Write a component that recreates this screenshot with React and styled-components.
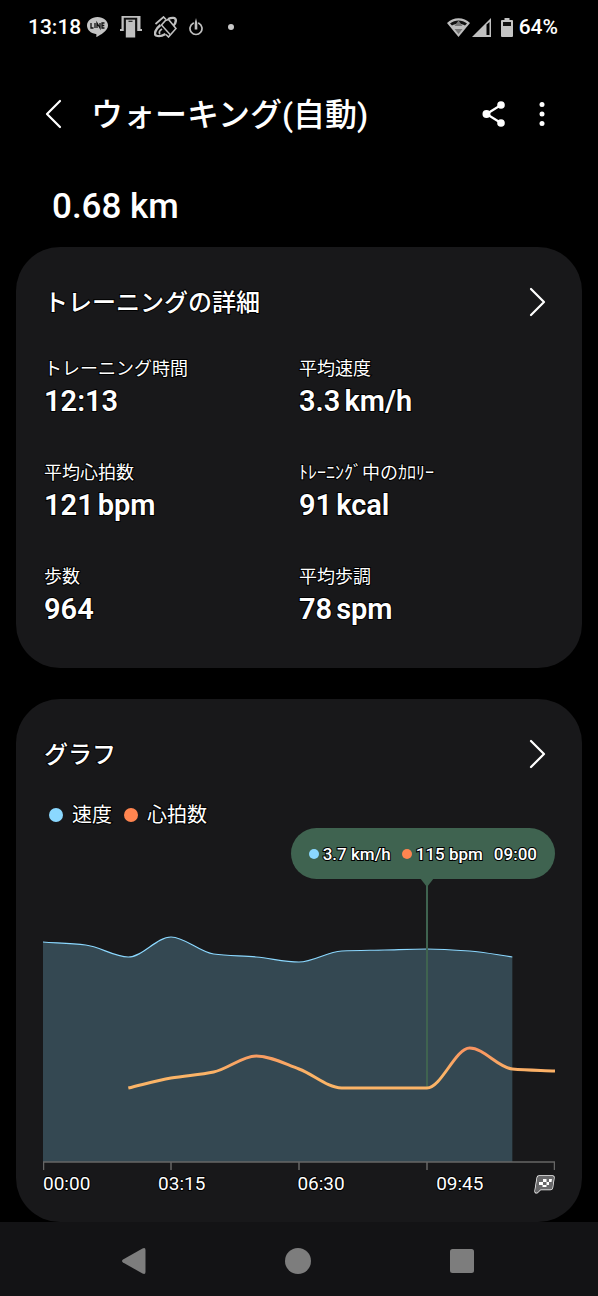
import React from "react";
import styled, { createGlobalStyle } from "styled-components";

const FONT = 'Roboto, "Noto Sans CJK JP", sans-serif';
const SPEED = "#8bd8ff";
const HEART = "#ff8550";
const TIP = "#3f6350";

const GlobalStyle = createGlobalStyle`
  * { box-sizing: border-box; }
  body { margin: 0; background: #000; color: #fff; font-family: ${FONT}; }
  button { border: 0; padding: 0; background: none; color: inherit; font: inherit; cursor: pointer; }
  svg { display: block; }
`;

const Page = styled.div`
  display: flex;
  flex-direction: column;
  min-height: 100vh;
`;

const StatusBar = styled.div`
  display: flex;
  justify-content: space-between;
  align-items: center;
  height: 54px;
  padding: 0 40px 0 28px;
  font-size: 21px;
  font-weight: 500;
`;

const StatusGroup = styled.div`
  display: flex;
  align-items: center;
  gap: ${(p) => p.$gap}px;
`;

const Header = styled.header`
  display: flex;
  align-items: center;
  height: 120px;
  padding: 0 36px 0 33px;
`;

const IconButton = styled.button`
  display: flex;
  align-items: center;
  justify-content: center;
  flex: none;
  width: ${(p) => p.$width || 40}px;
  height: 48px;
`;

const PageTitle = styled.h1`
  flex: 1;
  margin: 0 0 0 18px;
  padding-top: 2px;
  font-size: 32px;
  line-height: 48px;
  font-weight: 500;
`;

const Actions = styled.div`
  display: flex;
  gap: 8px;
`;

const Distance = styled.p`
  margin: 0;
  padding: 9px 52px 16px;
  font-size: 35px;
  line-height: 48px;
  font-weight: 500;
`;

const Card = styled.section`
  margin: 0 16px;
  padding: 31px 28px ${(p) => p.$bottom}px;
  border-radius: 44px;
  background: #18181a;
  -webkit-text-stroke: 2px #000;
  paint-order: stroke fill;

  & + & { margin-top: 31px; }
`;

const CardHead = styled.div`
  display: flex;
  align-items: center;
  justify-content: space-between;
  height: 48px;
`;

const CardTitle = styled.h2`
  margin: 0;
  padding-top: 2px;
  font-size: 24px;
  line-height: 36px;
  font-weight: 500;
`;

const Stats = styled.dl`
  display: grid;
  grid-template-columns: 1fr 1fr;
  row-gap: 40px;
  margin: 29px 0 0;
`;

const StatLabel = styled.dt`
  font-size: 18px;
  line-height: 28px;
  white-space: nowrap;
`;

const StatValue = styled.dd`
  display: flex;
  gap: 4px;
  margin: 0;
  font-size: 29px;
  line-height: 36px;
  font-weight: 600;
`;

const Legend = styled.div`
  display: flex;
  gap: 12px;
  margin: 21px 0 0 5px;
  font-size: 20px;
  line-height: 32px;
`;

const LegendItem = styled.span`
  display: flex;
  align-items: center;
  gap: 9px;
`;

const Dot = styled.i`
  flex: none;
  width: ${(p) => p.$size}px;
  height: ${(p) => p.$size}px;
  border-radius: 50%;
  background: ${(p) => p.$color};
`;

const Chart = styled.div`
  position: relative;
  margin: -3px -1px 0;
`;

const Plot = styled.svg`
  width: 100%;
  height: 344px;
`;

const Tooltip = styled.div`
  position: absolute;
  top: 0;
  right: 0;
  display: flex;
  align-items: center;
  gap: 11px;
  height: 51px;
  padding: 0 18px;
  border-radius: 26px;
  background: ${TIP};
  font-size: 17px;
  font-weight: 500;
  white-space: nowrap;
`;

const TooltipItem = styled.span`
  display: flex;
  align-items: center;
  gap: 4px;
`;

const Pointer = styled.div`
  position: absolute;
  top: 50px;
  left: 75%;
  width: 14px;
  height: 9px;
  margin-left: -7px;
  background: ${TIP};
  clip-path: polygon(0 0, 100% 0, 50% 100%);
`;

const Axis = styled.div`
  display: grid;
  grid-template-columns: 69fr 139fr 139fr 138fr 26fr;
  align-items: center;
  height: 24px;
  font-size: 19px;
  line-height: 24px;
  text-align: center;

  > :first-child { text-align: left; }
  > :last-child { justify-self: end; }
`;

const NavBar = styled.nav`
  display: flex;
  justify-content: center;
  align-items: center;
  gap: 100px;
  height: 74px;
  margin-top: auto;
  padding: 3px 3px 0 0;
  background: #131315;
  color: #7d7d7d;
`;

const Chevron = ({ left }) => (
  <svg width="18" height="30" viewBox="0 0 18 30" fill="none" stroke="#fff" strokeWidth="2.2" strokeLinecap="round" strokeLinejoin="round">
    <path d={left ? "M16 2 3 15l13 13" : "M2 2l13 13L2 28"} />
  </svg>
);

const LineIcon = () => (
  <svg width="21" height="20" viewBox="0 0 21 20">
    <path d="M10.500 0C4.700 0 0 3.900 0 8.500c0 4.300 3.700 7.800 8.700 8.500.8.200.8.600.6 2.400 0 .5.300.7.800.4C13 18.200 21 13.800 21 8.500 21 3.900 16.300 0 10.500 0z" fill="#c4c4c4" />
    <path d="M4 6v5h2.500M8 6v5M10 11V6l3 5V6M17.500 6H15v5h2.500M15 8.500h2.300" fill="none" stroke="#111" strokeWidth="1.300" />
  </svg>
);

const DeviceIcon = () => (
  <svg width="22" height="22" viewBox="0 0 22 22" fill="#c0c0c0">
    <path d="M1.500 0h19v13H22v2h-5V3.500a1 1 0 0 0-1-1H6a1 1 0 0 0-1 1V15H0v-2h1.500z" />
    <path fillRule="evenodd" d="M5.800 3.500h9.400V21.500H5.800zM8.500 4.700v1h4v-1z" />
    <path d="M4.500 15.500V2.600h12v12.900" fill="none" stroke="#111" strokeWidth="1.500" />
  </svg>
);

const RotateIcon = () => (
  <svg width="23" height="22" viewBox="0 0 23 22" fill="none" stroke="#c0c0c0">
    <path d="M1.500 8 9.500 1l2.500 2.500" strokeWidth="1.700" />
    <path d="M7 9.500 11.500 4.500l3-1L22 12.500 14.500 21 12 18.500" strokeWidth="1.600" />
    <path d="M7.500 9 16.500 19" strokeWidth="1.400" />
    <path d="M14 3c4-1.800 7.500-1.500 7.800 1 .2 2-.8 4-2.300 5.500" strokeWidth="2.400" />
    <path d="M6.500 9C2 12.500-.5 18 2 19.500c2.500 1.200 6.500.3 9.500-1.500" strokeWidth="2.400" />
    <path d="M8 13c-2.500 1.500-3.500 3.500-2 5" strokeWidth="1.800" />
  </svg>
);

const PowerIcon = () => (
  <svg width="14" height="18" viewBox="0 0 14 18" fill="none" stroke="#c0c0c0" strokeLinecap="round">
    <path d="M4.200 5.200a6 6 0 1 0 5.600 0" strokeWidth="1.700" />
    <path d="M7 0 8.300 5v6.500H5.700V5z" fill="#c0c0c0" stroke="none" />
  </svg>
);

const MoreDot = () => (
  <svg width="20" height="6" viewBox="0 0 20 6"><circle cx="16" cy="3" r="3" fill="#c8c8c8" /></svg>
);

const WifiIcon = () => (
  <svg width="23" height="19" viewBox="0 0 23 19">
    <path d="M11.500 19 0 5C6-1.300 17-1.300 23 5z" fill="#bebebe" />
    <path d="M3 5.500C8 1.500 15 1.500 20 5.500L18 7.500C14 5 9 5 5 7.500z" fill="#111" />
    <path d="M11.500 2.500 15.500 8h-8zM7.500 11h8l-4 5z" fill="#777" />
  </svg>
);

const SignalIcon = () => (
  <svg width="19" height="19" viewBox="0 0 19 19">
    <path d="M19 0v19H0z" fill="#c0c0c0" />
    <path d="M14.500 6.500 17.500 4v13h-3z" fill="#000" />
  </svg>
);

const BatteryIcon = () => (
  <svg width="12" height="19" viewBox="0 0 12 19">
    <path d="M3.500 0h5v2H11a1 1 0 0 1 1 1v15a1 1 0 0 1-1 1H1a1 1 0 0 1-1-1V3a1 1 0 0 1 1-1h2.500z" fill="#c4c4c4" />
    <path d="M2 4h8v4H2z" fill="#111" />
  </svg>
);

const ShareIcon = () => (
  <svg width="24" height="26" viewBox="0 0 24 26" fill="#fff">
    <path d="M19 4 4.500 13 19 22" fill="none" stroke="#fff" strokeWidth="2.200" />
    <circle cx="4.500" cy="13" r="4" />
    <circle cx="19" cy="4" r="3.800" />
    <circle cx="19" cy="22" r="3.800" />
  </svg>
);

const MoreIcon = () => (
  <svg width="6" height="26" viewBox="0 0 6 26" fill="#fff">
    <circle cx="3" cy="3.500" r="2.500" />
    <circle cx="3" cy="13" r="2.500" />
    <circle cx="3" cy="22.500" r="2.500" />
  </svg>
);

const FlagIcon = () => (
  <svg width="21" height="19" viewBox="0 0 21 19" role="img" aria-label="終了">
    <path d="M5 1h13.500q1.700 0 1.500 1.700l-1.500 10q-.3 1.800-2 1.800H6.500L3.500 17.500q-2.700.8-2.500-1.500L3.200 2.700Q3.500 1 5 1z" fill="#68686a" stroke="#fff" strokeWidth="1.400" />
    <path d="M9 4h3.500v3H9zM15 4h3l-.5 3H15zM5 7h4v3H5zM12.500 7H15v3h-2.500zM8.500 10h4v2h-4z" fill="#fff" />
  </svg>
);

const stats = [
  ["トレーニング時間", "12:13"],
  ["平均速度", "3.3", "km/h"],
  ["平均心拍数", "121", "bpm"],
  ["ﾄﾚｰﾆﾝｸﾞ中のｶﾛﾘｰ", "91", "kcal"],
  ["歩数", "964"],
  ["平均歩調", "78", "spm"],
];

const STEP = 512 / 12;
const speed = [114, 117, 129, 109, 126, 129, 134, 123, 122, 121, 123, 129].map((y, i) => [i * STEP, y]);
const heart = [260, 250, 244, 228, 241, 260, 260, 260, 220, 241, 243].map((y, i) => [(i + 2) * STEP, y]);

// Cubic path that never overshoots its points.
function smooth(points) {
  const n = points.length;
  const slope = (i) => (points[i + 1][1] - points[i][1]) / (points[i + 1][0] - points[i][0]);
  const tangent = points.map((_, i) => {
    if (i === 0) return slope(0);
    if (i === n - 1) return slope(n - 2);
    const a = slope(i - 1);
    const b = slope(i);
    return a * b <= 0 ? 0 : (2 * a * b) / (a + b);
  });
  return points.reduce((d, [x, y], i) => {
    if (i === 0) return `M${x} ${y}`;
    const [px, py] = points[i - 1];
    const h = (x - px) / 3;
    return `${d}C${px + h} ${py + tangent[i - 1] * h} ${x - h} ${y - tangent[i] * h} ${x} ${y}`;
  }, "");
}

export default function App() {
  const speedPath = smooth(speed);
  return (
    <Page>
      <GlobalStyle />
      <StatusBar>
        <StatusGroup $gap={12}>
          <StatusGroup $gap={6}>
            <span>13:18</span>
            <LineIcon />
          </StatusGroup>
          <DeviceIcon />
          <RotateIcon />
          <PowerIcon />
          <MoreDot />
        </StatusGroup>
        <StatusGroup $gap={10}>
          <StatusGroup $gap={2}>
            <WifiIcon />
            <SignalIcon />
          </StatusGroup>
          <StatusGroup $gap={6}>
            <BatteryIcon />
            <span>64%</span>
          </StatusGroup>
        </StatusGroup>
      </StatusBar>

      <Header>
        <IconButton aria-label="戻る"><Chevron left /></IconButton>
        <PageTitle>ウォーキング(自動)</PageTitle>
        <Actions>
          <IconButton aria-label="共有"><ShareIcon /></IconButton>
          <IconButton aria-label="その他"><MoreIcon /></IconButton>
        </Actions>
      </Header>

      <Distance>0.68 km</Distance>

      <Card $bottom={41}>
        <CardHead>
          <CardTitle>トレーニングの詳細</CardTitle>
          <IconButton $width={32} aria-label="トレーニングの詳細を開く"><Chevron /></IconButton>
        </CardHead>
        <Stats>
          {stats.map(([label, value, unit]) => (
            <div key={label}>
              <StatLabel>{label}</StatLabel>
              <StatValue>
                <span>{value}</span>
                {unit && <span>{unit}</span>}
              </StatValue>
            </div>
          ))}
        </Stats>
      </Card>

      <Card $bottom={26}>
        <CardHead>
          <CardTitle>グラフ</CardTitle>
          <IconButton $width={32} aria-label="グラフを開く"><Chevron /></IconButton>
        </CardHead>
        <Legend>
          <LegendItem><Dot $size={14} $color={SPEED} />速度</LegendItem>
          <LegendItem><Dot $size={14} $color={HEART} />心拍数</LegendItem>
        </Legend>
        <Chart>
          <Plot viewBox="0 0 512 344" preserveAspectRatio="none" fill="none">
            <defs>
              <linearGradient id="heart" gradientUnits="userSpaceOnUse" x1="0" x2="0" y1="220" y2="246">
                <stop offset="0" stopColor="#f89360" />
                <stop offset="1" stopColor="#fbb467" />
              </linearGradient>
            </defs>
            <path d={`${speedPath}V334H0z`} fill="#344852" />
            <path d={speedPath} stroke={SPEED} strokeWidth="1.200" />
            <path d="M384 51V260" stroke={TIP} strokeWidth="2" />
            <path d={smooth(heart)} stroke="url(#heart)" strokeWidth="3" />
            <path d="M0 334H512M.5 334v8M128 334v8M256 334v8M384 334v8M511.500 334v8" stroke="#666" strokeWidth="1.500" />
          </Plot>
          <Tooltip>
            <TooltipItem><Dot $size={10} $color={SPEED} />3.7 km/h</TooltipItem>
            <TooltipItem><Dot $size={10} $color={HEART} />115 bpm</TooltipItem>
            <span>09:00</span>
          </Tooltip>
          <Pointer />
          <Axis>
            <span>00:00</span>
            <span>03:15</span>
            <span>06:30</span>
            <span>09:45</span>
            <FlagIcon />
          </Axis>
        </Chart>
      </Card>

      <NavBar>
        <IconButton $width={64} aria-label="戻る">
          <svg width="24" height="26" viewBox="0 0 24 26" fill="currentColor">
            <path d="M1 11.500 20.500.5Q23.500-.8 23.500 2v22q0 2.800-3 1.500L1 14.500q-2-1.500 0-3z" />
          </svg>
        </IconButton>
        <IconButton $width={64} aria-label="ホーム">
          <svg width="26" height="26" viewBox="0 0 26 26" fill="currentColor"><circle cx="13" cy="13" r="13" /></svg>
        </IconButton>
        <IconButton $width={64} aria-label="履歴">
          <svg width="24" height="24" viewBox="0 0 24 24" fill="currentColor"><rect width="24" height="24" rx="2.500" /></svg>
        </IconButton>
      </NavBar>
    </Page>
  );
}
